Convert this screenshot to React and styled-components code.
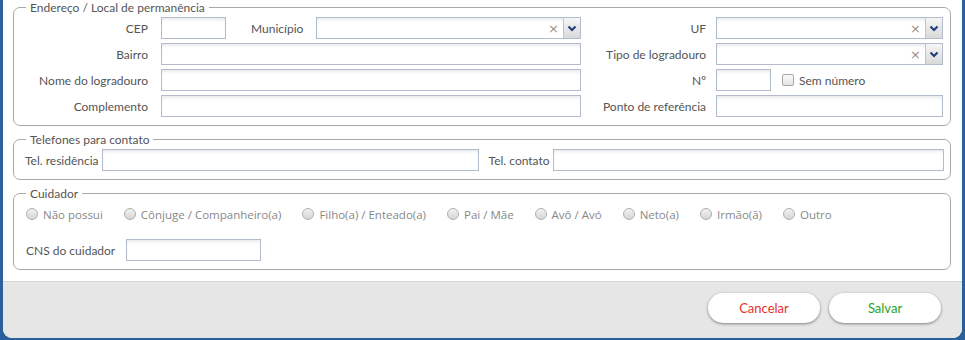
import styled, { createGlobalStyle } from 'styled-components';

const GlobalStyle = createGlobalStyle`
    html, body {
        margin: 0;
        padding: 0;
        background: #2b619b;
        overflow: hidden;
    }
    * {
        box-sizing: border-box;
    }
`;

const radios = [
    "Não possui",
    "Cônjuge / Companheiro(a)",
    "Filho(a) / Enteado(a)",
    "Pai / Mãe",
    "Avô / Avó",
    "Neto(a)",
    "Irmão(ã)",
    "Outro",
];

function Select() {
    return (
        <SelectBox>
            <Spacer />
            <Clear>×</Clear>
            <Arrow>
                <svg width="10" height="7" viewBox="0 0 10 7">
                    <path d="M1.5 1.5 L5 5 L8.5 1.5" fill="none" stroke="#23407c" strokeWidth="2.2" />
                </svg>
            </Arrow>
        </SelectBox>
    );
}

function App() {
    return (
        <>
            <GlobalStyle />
            <Dialog>
                <Content>
                    <Fieldset>
                        <Legend>Endereço / Local de permanência</Legend>
                        <AddressGrid>
                            <Label>CEP</Label>
                            <Inline>
                                <Input width={65} />
                                <InlineLabel>Município</InlineLabel>
                                <Select />
                            </Inline>
                            <Label>UF</Label>
                            <Select />

                            <Label>Bairro</Label>
                            <Input />
                            <Label>Tipo de logradouro</Label>
                            <Select />

                            <Label>Nome do logradouro</Label>
                            <Input />
                            <Label>Nº</Label>
                            <Inline>
                                <Input width={55} />
                                <Check />
                                <CheckText>Sem número</CheckText>
                            </Inline>

                            <Label>Complemento</Label>
                            <Input />
                            <Label>Ponto de referência</Label>
                            <Input />
                        </AddressGrid>
                    </Fieldset>

                    <Fieldset>
                        <Legend>Telefones para contato</Legend>
                        <PhoneRow>
                            <PhoneLabel>Tel. residência</PhoneLabel>
                            <Input width={377} />
                            <PhoneLabel>Tel. contato</PhoneLabel>
                            <Input />
                        </PhoneRow>
                    </Fieldset>

                    <Fieldset>
                        <Legend>Cuidador</Legend>
                        <RadioRow>
                            {radios.map((r) => (
                                <RadioItem key={r}>
                                    <Radio />
                                    <span>{r}</span>
                                </RadioItem>
                            ))}
                        </RadioRow>
                        <CnsRow>
                            <PhoneLabel>CNS do cuidador</PhoneLabel>
                            <Input width={135} />
                        </CnsRow>
                    </Fieldset>
                </Content>
                <Footer>
                    <Button color="#e5322f">Cancelar</Button>
                    <Button color="#1ea51e">Salvar</Button>
                </Footer>
            </Dialog>
        </>
    );
}

const Dialog = styled.div`
    margin-left: 3px;
    width: 959px;
    height: 338px;
    background: #ffffff;
    border-radius: 0 0 9px 9px;
    overflow: hidden;
    display: flex;
    flex-direction: column;
    font-family: Lato, "Open Sans", sans-serif;
    color: #555;
`;

const Content = styled.div`
    height: 281px;
    padding-left: 10px;
`;

const Fieldset = styled.fieldset`
    width: 938px;
    margin: 0 0 6px 0;
    padding: 2px 0 8px 0;
    border: 1px solid #a9a9a9;
    border-radius: 7px;
`;

const Legend = styled.legend`
    margin-left: 12px;
    padding: 0 4px;
    font-size: 12px;
    line-height: 15px;
    color: #555;
`;

const AddressGrid = styled.div`
    display: grid;
    grid-template-columns: 147px 420px 135px 227px;
    grid-auto-rows: 22px;
    row-gap: 4px;
`;

const Label = styled.div`
    display: flex;
    align-items: center;
    justify-content: flex-end;
    padding-right: 13px;
    font-size: 12px;
    color: #555;
    white-space: nowrap;
    &:nth-child(4n + 3) {
        padding-right: 10px;
    }
`;

const Inline = styled.div`
    display: flex;
    align-items: center;
`;

const InlineLabel = styled.span`
    margin: 0 13px 0 25px;
    font-size: 12px;
    color: #555;
`;

const Input = styled.div`
    height: 22px;
    width: ${({ width }) => (width ? `${width}px` : 'auto')};
    flex: ${({ width }) => (width ? 'none' : '1')};
    border: 1px solid #b3bccb;
    background: #fff;
    box-shadow: inset 0 3px 4px -2px rgba(0, 0, 0, 0.12);
`;

const SelectBox = styled.div`
    flex: 1;
    height: 22px;
    display: flex;
    align-items: stretch;
    border: 1px solid #b3bccb;
    background: #fff;
    box-shadow: inset 0 3px 4px -2px rgba(0, 0, 0, 0.12);
`;

const Spacer = styled.div`
    flex: 1;
`;

const Clear = styled.span`
    display: flex;
    align-items: center;
    padding-right: 4px;
    font-family: "DejaVu Sans", sans-serif;
    font-size: 13px;
    color: #a08f84;
`;

const Arrow = styled.div`
    width: 17px;
    display: flex;
    align-items: center;
    justify-content: center;
    border-left: 1px solid #c3c3c3;
    background: linear-gradient(#f6f6f6, #d9d9d9);
`;

const Check = styled.span`
    width: 12px;
    height: 12px;
    margin: 0 5px 0 11px;
    border: 1px solid #a8a8a8;
    border-radius: 2px;
    background: linear-gradient(#fafafa, #e4e4e4);
`;

const CheckText = styled.span`
    font-size: 12px;
    color: #555;
`;

const PhoneRow = styled.div`
    display: flex;
    align-items: center;
    gap: 3px;
    padding: 0 6px 0 11px;
    height: 22px;

    > div:nth-child(2) {
        margin-right: 7px;
    }
`;

const PhoneLabel = styled.span`
    font-size: 12px;
    color: #555;
    white-space: nowrap;
`;

const RadioRow = styled.div`
    display: flex;
    align-items: center;
    gap: 21px;
    height: 18px;
    margin-top: 2px;
    padding-left: 12px;
`;

const RadioItem = styled.label`
    display: flex;
    align-items: center;
    gap: 5px;
    font-family: "Open Sans", sans-serif;
    font-size: 11.5px;
    color: #888;
    white-space: nowrap;
`;

const Radio = styled.span`
    width: 12px;
    height: 12px;
    border-radius: 50%;
    border: 1px solid #b0b0b0;
    background: linear-gradient(#f2f2f2, #d6d6d6);
`;

const CnsRow = styled.div`
    display: flex;
    align-items: center;
    gap: 11px;
    margin-top: 16px;
    padding-left: 12px;
`;

const Footer = styled.div`
    flex: 1;
    display: flex;
    justify-content: flex-end;
    align-items: flex-start;
    gap: 9px;
    padding: 11px 21px 0 0;
    background: #e6e6e6;
    border-top: 1px solid #d4d4d4;
`;

const Button = styled.button`
    width: 112px;
    height: 30px;
    border: none;
    border-radius: 15px;
    background: #fff;
    box-shadow: 0 1px 3px rgba(0, 0, 0, 0.45);
    font-family: Lato, sans-serif;
    font-size: 13px;
    color: ${({ color }) => color};
    cursor: pointer;
`;

export default App;
